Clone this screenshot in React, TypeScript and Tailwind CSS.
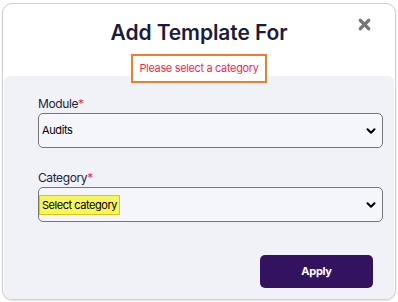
import { X, ChevronDown } from 'lucide-react';

export default function App() {
  return (
    <div className="w-[398px] h-[302px] bg-white pt-[3px] px-[2px] font-['Inter',sans-serif]">
      <div className="h-[297px] flex flex-col rounded-[10px] border border-[#cfcfcf] shadow-[0_1px_2px_rgba(0,0,0,0.12)] overflow-hidden bg-white">
        {/* Header */}
        <div className="relative flex flex-col items-center pt-[16px] -mb-[7px] z-10">
          <h1 className="text-[21px] leading-[26px] font-semibold text-[#1b1c3b] tracking-[-0.1px]">
            Add Template For
          </h1>
          <button className="absolute right-[22px] top-[12px] text-[#777777]">
            <X size={17} strokeWidth={4.5} />
          </button>
          <div className="mt-[8px] h-[29px] px-[6px] flex items-center border-2 border-[#f37b2a] bg-white">
            <span className="text-[11px] tracking-[-0.35px] text-[#ee2d4c]">Please select a category</span>
          </div>
        </div>

        {/* Form panel */}
        <div className="flex-1 bg-[#f1f2f8] rounded-t-[6px] mx-[1px] pl-[34px] pr-[11px] pt-[20px]">
          <label className="block text-[12px] leading-[16px] tracking-[-0.4px] text-[#1c2340]">
            Module<span className="text-[#e8304a]">*</span>
          </label>
          <div className="mt-[1px] h-[35px] flex items-center justify-between rounded-[5px] border border-[#767676] bg-[#f5f6fb] pl-[3px] pr-[4px]">
            <span className="text-[11px] tracking-[-0.4px] text-black">Audits</span>
            <ChevronDown size={14} strokeWidth={3.5} className="text-black" />
          </div>

          <label className="block mt-[22px] text-[12px] leading-[16px] tracking-[-0.4px] text-[#1c2340]">
            Category<span className="text-[#e8304a]">*</span>
          </label>
          <div className="mt-[1px] h-[35px] flex items-center justify-between rounded-[5px] border border-[#767676] bg-[#f5f6fb] pr-[4px]">
            <span className="text-[11px] leading-[16px] tracking-[-0.45px] text-black bg-[#f5f65e] border border-[#e8c500] px-[2px] py-[1px]">
              Select category
            </span>
            <ChevronDown size={14} strokeWidth={3.5} className="text-black" />
          </div>

          <div className="flex justify-end mt-[33px] pr-[10px]">
            <button className="w-[113px] h-[33px] rounded-[5px] bg-[#33135f] text-white text-[11px] font-bold tracking-[-0.3px]">
              Apply
            </button>
          </div>
        </div>
      </div>
    </div>
  );
}
